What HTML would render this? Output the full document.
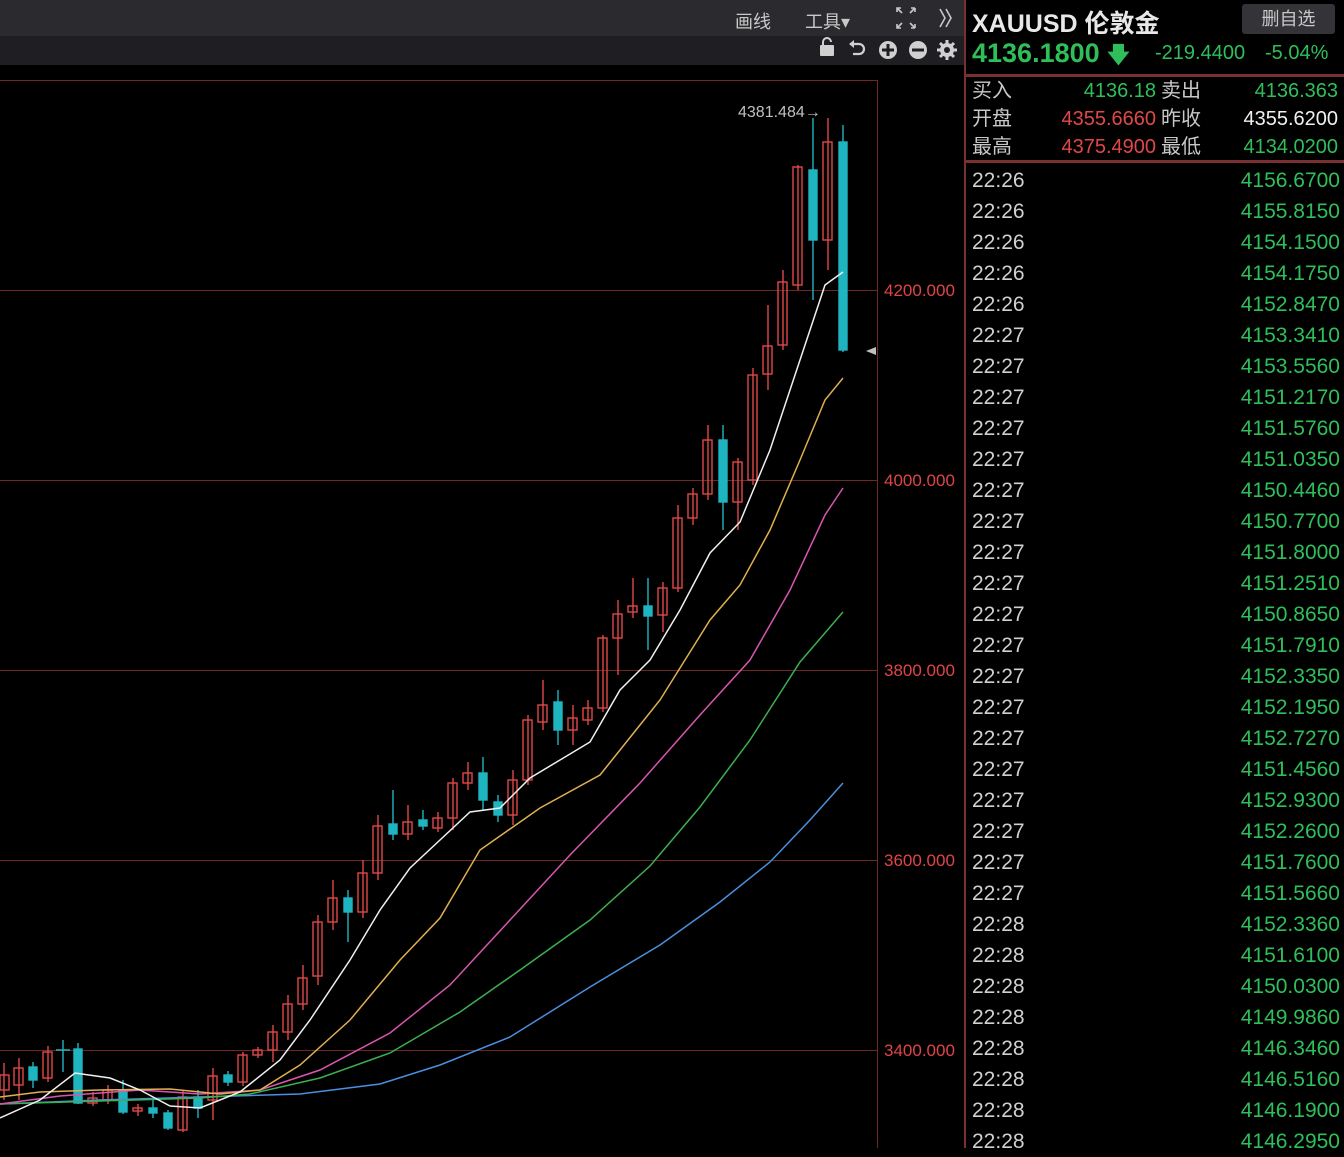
<!DOCTYPE html>
<html><head><meta charset="utf-8"><style>
*{margin:0;padding:0;box-sizing:border-box}
body{width:1344px;height:1148px;background:#000;overflow:hidden;font-family:"Liberation Sans","Noto Sans CJK SC",sans-serif;position:relative}
.tb1{position:absolute;left:0;top:0;width:964px;height:36px;background:#2b2b2f}
.tb2{position:absolute;left:0;top:36px;width:964px;height:29px;background:#1f1f23}
.tb1 span{position:absolute;top:8px;color:#c8c8c8;font-size:18px}
.rp{position:absolute;left:964px;top:0;width:380px;height:1148px;border-left:2px solid #7a3030}
.hdr{position:absolute;left:6px;top:4px;color:#e8e8e8;font-size:25px;font-weight:bold}
.btn{position:absolute;left:276px;top:4px;width:93px;height:30px;background:#333338;border-radius:3px;color:#c8c8c8;font-size:18px;text-align:center;line-height:30px}
.px{position:absolute;left:6px;top:38px;color:#2fbf5a;font-size:27px;font-weight:bold}
.chg{position:absolute;top:42px;color:#2fbf5a;font-size:20px}
.sep{position:absolute;left:0;width:380px;height:3px;background:#7a3030}
.q{position:absolute;font-size:20px;line-height:28px}
.rows{position:absolute;left:0;top:165px;width:380px}
.row{height:31px;line-height:31px;font-size:21px;position:relative}
.row .t{position:absolute;left:6px;color:#d0d0d0}
.row .v{position:absolute;right:6px;color:#2fbf5a}
</style></head><body>
<div class="tb1"><span style="left:735px">画线</span><span style="left:805px">工具▾</span>
<svg width="964" height="36" style="position:absolute;left:0;top:0"><g stroke="#c8c8c8" stroke-width="1.6" fill="none">
<path d="M897 12V8h4M915 8h-4M915 8v4M897 24v4h4M915 28h-4M915 28v-4M897 8l5 5M915 8l-5 5M897 28l5-5M915 28l-5-5"/>
<path d="M940 9l5 9-5 9M946 9l5 9-5 9"/></g></svg></div>
<div class="tb2">
<svg width="964" height="29" style="position:absolute;left:0;top:0">
<g fill="#d0d0d0"><rect x="820" y="9" width="14" height="11" rx="1"/><path d="M823 9v-3a4 4 0 0 1 8 0" stroke="#d0d0d0" stroke-width="2" fill="none"/>
<path d="M852 8h7a5 5 0 0 1 0 10h-6" stroke="#d0d0d0" stroke-width="2.2" fill="none"/><path d="M849 8l5-4v8z"/>
<circle cx="888" cy="14" r="9"/><circle cx="918" cy="14" r="9"/><circle cx="947" cy="14" r="7"/></g>
<g stroke="#1f1f23" stroke-width="3"><path d="M882 14h12M888 8v12M912 14h12"/></g>
<g stroke="#d0d0d0" stroke-width="3"><path d="M947 4v20M937 14h20M940 7l14 14M954 7l-14 14"/></g><circle cx="947" cy="14" r="3" fill="#1f1f23"/>
</svg></div>
<svg width="964" height="1148" style="position:absolute;left:0;top:0">
<g stroke="#6e2626" stroke-width="1"><path d="M0 80.5H877.5V1148M0 290.5H877M0 480.5H877M0 670.5H877M0 860.5H877M0 1050.5H877"/></g>
<g fill="#e04545" font-size="17" font-family="Liberation Sans"><text x="884" y="296">4200.000</text><text x="884" y="486">4000.000</text><text x="884" y="676">3800.000</text><text x="884" y="866">3600.000</text><text x="884" y="1056">3400.000</text></g>
<text x="738" y="117" fill="#c0c0c0" font-size="16" font-family="Liberation Sans">4381.484→</text>
<path d="M866 351l10-4v8z" fill="#c0c0c0"/>
<g stroke="#e04848" stroke-width="1.4" fill="none">
<path d="M4 1063V1100M19 1058V1100M48 1046V1082M93 1092V1106M108 1085V1104M138 1104V1116M183 1090V1132M213 1068V1120M243 1052V1086M258 1047V1058M273 1025V1062M288 995V1040M303 965V1010M318 915V985M333 880V930M363 860V918M378 815V880M408 805V840M438 812V832M453 778V830M468 762V790M513 770V825M528 715V785M543 680V730M573 705V745M588 700V725M603 635V712M618 600V675M633 578V618M663 582V632M678 505V592M693 488V525M708 425V500M738 458V530M753 368V485M768 305V390M783 270V350M798 165V290M828 118V270"/>
<rect x="0" y="1075" width="9" height="15"/><rect x="14" y="1068" width="9" height="17"/><rect x="43" y="1052" width="9" height="26"/><rect x="88" y="1098" width="9" height="5"/><rect x="103" y="1090" width="9" height="10"/><rect x="133" y="1108" width="9" height="3"/><rect x="178" y="1097" width="9" height="33"/><rect x="208" y="1076" width="9" height="24"/><rect x="238" y="1055" width="9" height="27"/><rect x="253" y="1050" width="9" height="5"/><rect x="268" y="1032" width="9" height="18"/><rect x="283" y="1004" width="9" height="28"/><rect x="298" y="978" width="9" height="26"/><rect x="313" y="922" width="9" height="54"/><rect x="328" y="898" width="9" height="24"/><rect x="358" y="873" width="9" height="39"/><rect x="373" y="826" width="9" height="47"/><rect x="403" y="822" width="9" height="12"/><rect x="433" y="818" width="9" height="10"/><rect x="448" y="783" width="9" height="35"/><rect x="463" y="773" width="9" height="10"/><rect x="508" y="780" width="9" height="35"/><rect x="523" y="720" width="9" height="60"/><rect x="538" y="705" width="9" height="17"/><rect x="568" y="718" width="9" height="12"/><rect x="583" y="708" width="9" height="12"/><rect x="598" y="638" width="9" height="70"/><rect x="613" y="614" width="9" height="24"/><rect x="628" y="606" width="9" height="6"/><rect x="658" y="588" width="9" height="27"/><rect x="673" y="518" width="9" height="70"/><rect x="688" y="494" width="9" height="24"/><rect x="703" y="440" width="9" height="54"/><rect x="733" y="462" width="9" height="40"/><rect x="748" y="375" width="9" height="105"/><rect x="763" y="346" width="9" height="28"/><rect x="778" y="282" width="9" height="63"/><rect x="793" y="167" width="9" height="118"/><rect x="823" y="142" width="9" height="98"/>
</g>
<g stroke="#1fb5c0" stroke-width="1.4" fill="#1fb5c0">
<path d="M33 1062V1088M63 1040V1072M78 1043V1104M123 1080V1114M153 1100V1118M168 1110V1130M198 1090V1118M228 1071V1086M348 890V942M393 790V840M423 810V830M483 757V810M498 795V822M558 690V745M648 578V650M723 425V530M813 118V300M843 125V352M56 1050H70"/>
<rect x="29" y="1067" width="8" height="13"/><rect x="74" y="1049" width="8" height="54"/><rect x="119" y="1090" width="8" height="22"/><rect x="149" y="1108" width="8" height="5"/><rect x="164" y="1113" width="8" height="15"/><rect x="194" y="1097" width="8" height="11"/><rect x="224" y="1075" width="8" height="7"/><rect x="344" y="898" width="8" height="14"/><rect x="389" y="824" width="8" height="10"/><rect x="419" y="820" width="8" height="6"/><rect x="479" y="773" width="8" height="27"/><rect x="494" y="802" width="8" height="13"/><rect x="554" y="702" width="8" height="28"/><rect x="644" y="606" width="8" height="10"/><rect x="719" y="440" width="8" height="62"/><rect x="809" y="170" width="8" height="70"/><rect x="839" y="142" width="8" height="208"/>
</g>
<g fill="none" stroke-width="1.5">
<path stroke="#4a90e0" d="M0 1104L100 1100L200 1097L300 1094L380 1084L440 1065L510 1037L590 987L660 945L720 902L770 862L810 820L843 783"/>
<path stroke="#3cb050" d="M0 1104L100 1101L200 1098L250 1094L320 1078L390 1053L460 1012L520 970L590 920L650 866L700 807L750 740L800 662L843 612"/>
<path stroke="#d856b0" d="M0 1104L60 1096L140 1090L200 1094L260 1090L320 1070L390 1033L450 985L510 920L570 855L640 783L700 715L750 660L790 590L825 515L843 488"/>
<path stroke="#e0b050" d="M0 1097L40 1092L100 1090L170 1089L220 1094L260 1090L300 1065L350 1020L400 960L440 918L480 850L540 808L600 775L660 700L710 620L740 585L770 530L800 460L825 400L843 378"/>
<path stroke="#f0f0f0" d="M0 1118L40 1100L75 1073L110 1078L140 1090L170 1106L200 1108L240 1092L280 1060L310 1020L350 960L380 910L410 868L440 840L470 812L500 808L530 778L560 760L590 742L620 690L650 660L680 610L710 553L740 522L770 450L800 360L825 285L843 272"/>
</g>
</svg>
<div class="rp">
<div class="hdr">XAUUSD 伦敦金</div>
<div class="btn">删自选</div>
<div class="px">4136.1800 <span style="font-size:22px">🡇</span></div>
<div class="chg" style="left:189px">-219.4400</div>
<div class="chg" style="left:299px">-5.04%</div>
<div class="sep" style="top:74px"></div>
<div class="q" style="left:6px;top:77px;color:#c8c8c8">买入<br>开盘<br>最高</div>
<div class="q" style="right:188px;top:77px;text-align:right"><span style="color:#2fbf5a">4136.18</span><br><span style="color:#e04848">4355.6660</span><br><span style="color:#e04848">4375.4900</span></div>
<div class="q" style="left:195px;top:77px;color:#c8c8c8">卖出<br>昨收<br>最低</div>
<div class="q" style="right:6px;top:77px;text-align:right"><span style="color:#2fbf5a">4136.363</span><br><span style="color:#f0f0f0">4355.6200</span><br><span style="color:#2fbf5a">4134.0200</span></div>
<div class="sep" style="top:160px"></div>
<div class="rows">
<div class="row"><span class="t">22:26</span><span class="v">4156.6700</span></div>
<div class="row"><span class="t">22:26</span><span class="v">4155.8150</span></div>
<div class="row"><span class="t">22:26</span><span class="v">4154.1500</span></div>
<div class="row"><span class="t">22:26</span><span class="v">4154.1750</span></div>
<div class="row"><span class="t">22:26</span><span class="v">4152.8470</span></div>
<div class="row"><span class="t">22:27</span><span class="v">4153.3410</span></div>
<div class="row"><span class="t">22:27</span><span class="v">4153.5560</span></div>
<div class="row"><span class="t">22:27</span><span class="v">4151.2170</span></div>
<div class="row"><span class="t">22:27</span><span class="v">4151.5760</span></div>
<div class="row"><span class="t">22:27</span><span class="v">4151.0350</span></div>
<div class="row"><span class="t">22:27</span><span class="v">4150.4460</span></div>
<div class="row"><span class="t">22:27</span><span class="v">4150.7700</span></div>
<div class="row"><span class="t">22:27</span><span class="v">4151.8000</span></div>
<div class="row"><span class="t">22:27</span><span class="v">4151.2510</span></div>
<div class="row"><span class="t">22:27</span><span class="v">4150.8650</span></div>
<div class="row"><span class="t">22:27</span><span class="v">4151.7910</span></div>
<div class="row"><span class="t">22:27</span><span class="v">4152.3350</span></div>
<div class="row"><span class="t">22:27</span><span class="v">4152.1950</span></div>
<div class="row"><span class="t">22:27</span><span class="v">4152.7270</span></div>
<div class="row"><span class="t">22:27</span><span class="v">4151.4560</span></div>
<div class="row"><span class="t">22:27</span><span class="v">4152.9300</span></div>
<div class="row"><span class="t">22:27</span><span class="v">4152.2600</span></div>
<div class="row"><span class="t">22:27</span><span class="v">4151.7600</span></div>
<div class="row"><span class="t">22:27</span><span class="v">4151.5660</span></div>
<div class="row"><span class="t">22:28</span><span class="v">4152.3360</span></div>
<div class="row"><span class="t">22:28</span><span class="v">4151.6100</span></div>
<div class="row"><span class="t">22:28</span><span class="v">4150.0300</span></div>
<div class="row"><span class="t">22:28</span><span class="v">4149.9860</span></div>
<div class="row"><span class="t">22:28</span><span class="v">4146.3460</span></div>
<div class="row"><span class="t">22:28</span><span class="v">4146.5160</span></div>
<div class="row"><span class="t">22:28</span><span class="v">4146.1900</span></div>
<div class="row"><span class="t">22:28</span><span class="v">4146.2950</span></div>
</div>
</div>
</body></html>
